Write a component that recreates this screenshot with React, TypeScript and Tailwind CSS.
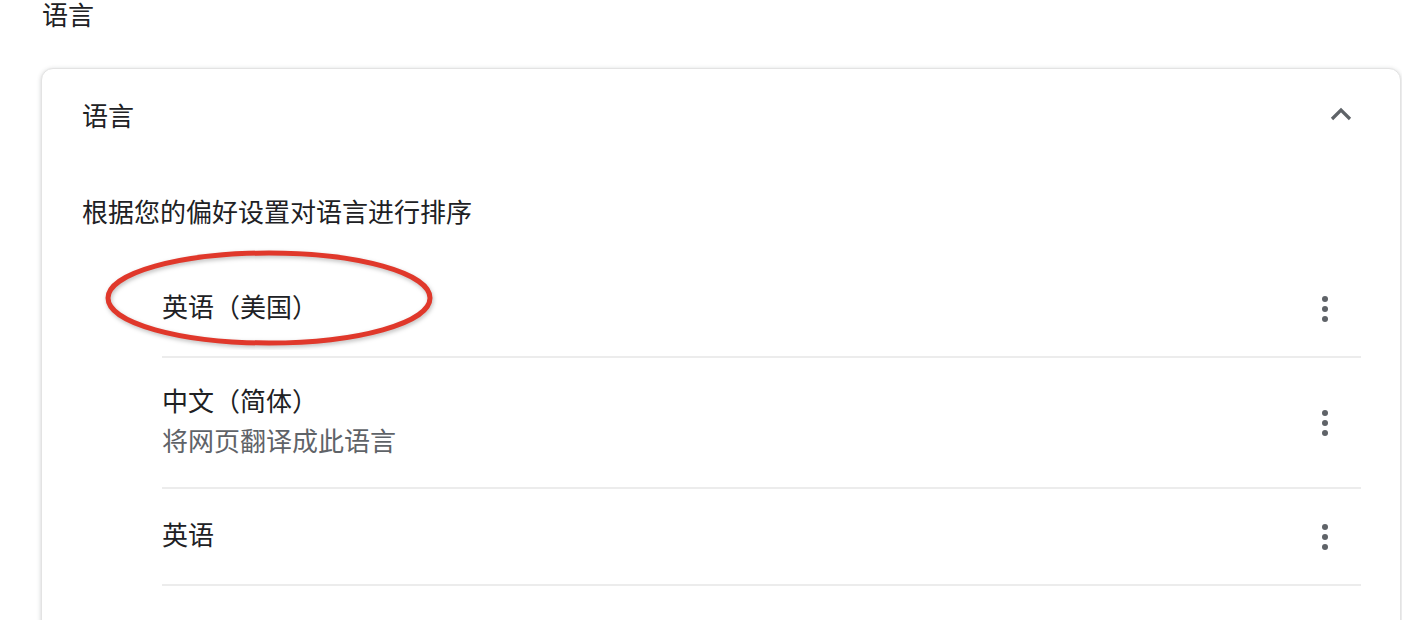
import React from "react";

type Lang = { name: string; note?: string };

const langs: Lang[] = [
  { name: "英语（美国）" },
  { name: "中文（简体）", note: "将网页翻译成此语言" },
  { name: "英语" },
];

function Kebab() {
  return (
    <svg width="8" height="28" viewBox="0 0 8 28" className="text-[#5f6368]">
      <circle cx="4" cy="4" r="3" fill="currentColor" />
      <circle cx="4" cy="14" r="3" fill="currentColor" />
      <circle cx="4" cy="24" r="3" fill="currentColor" />
    </svg>
  );
}

export default function App() {
  return (
    <div
      className="w-[1402px] h-[620px] overflow-hidden bg-white text-[#202124]"
      style={{ fontFamily: '"Noto Sans CJK SC", "Noto Sans", sans-serif' }}
    >
      <div className="pl-[42px] h-[30px] text-[26px] leading-[26px] pt-[1px]">语言</div>

      <div className="relative mt-[38px] ml-[41px] w-[1360px] h-[600px] rounded-[12px] bg-white border border-[#e3e3e3] shadow-[0_1px_4px_rgba(60,64,67,0.25)] pl-[40px] pr-[39px]">
        {/* header */}
        <div className="h-[96px] pb-[6px] flex items-center justify-between">
          <span className="text-[26px]">语言</span>
          <svg width="24" height="16" viewBox="0 0 24 16" className="mr-[8px] text-[#5f6368]">
            <path d="M3 13 L12 4 L21 13" fill="none" stroke="currentColor" strokeWidth="3.2" />
          </svg>
        </div>

        <div className="h-[96px] pb-[6px] flex items-center text-[26px]">根据您的偏好设置对语言进行排序</div>

        <ul className="ml-[80px]">
          {langs.map((l, i) => (
            <li
              key={i}
              className={`flex items-center justify-between border-b-2 border-[#ececec] ${
                l.note ? "h-[131px]" : "h-[97px]"
              }`}
            >
              <div className="text-[26px] leading-[40px] pb-[6px]">
                <div>{l.name}</div>
                {l.note && <div className="text-[#5f6368]">{l.note}</div>}
              </div>
              <span className="mr-[32px] flex">
                <Kebab />
              </span>
            </li>
          ))}
        </ul>

        {/* red annotation ellipse */}
        <svg
          className="absolute left-[58px] top-[177px] pointer-events-none"
          width="340"
          height="104"
          viewBox="0 0 340 104"
        >
          <ellipse
            cx="169"
            cy="52"
            rx="161"
            ry="45"
            fill="none"
            stroke="#e0382b"
            strokeWidth="5"
            style={{ filter: "drop-shadow(1px 2px 2px rgba(0,0,0,0.25))" }}
          />
        </svg>
      </div>
    </div>
  );
}
